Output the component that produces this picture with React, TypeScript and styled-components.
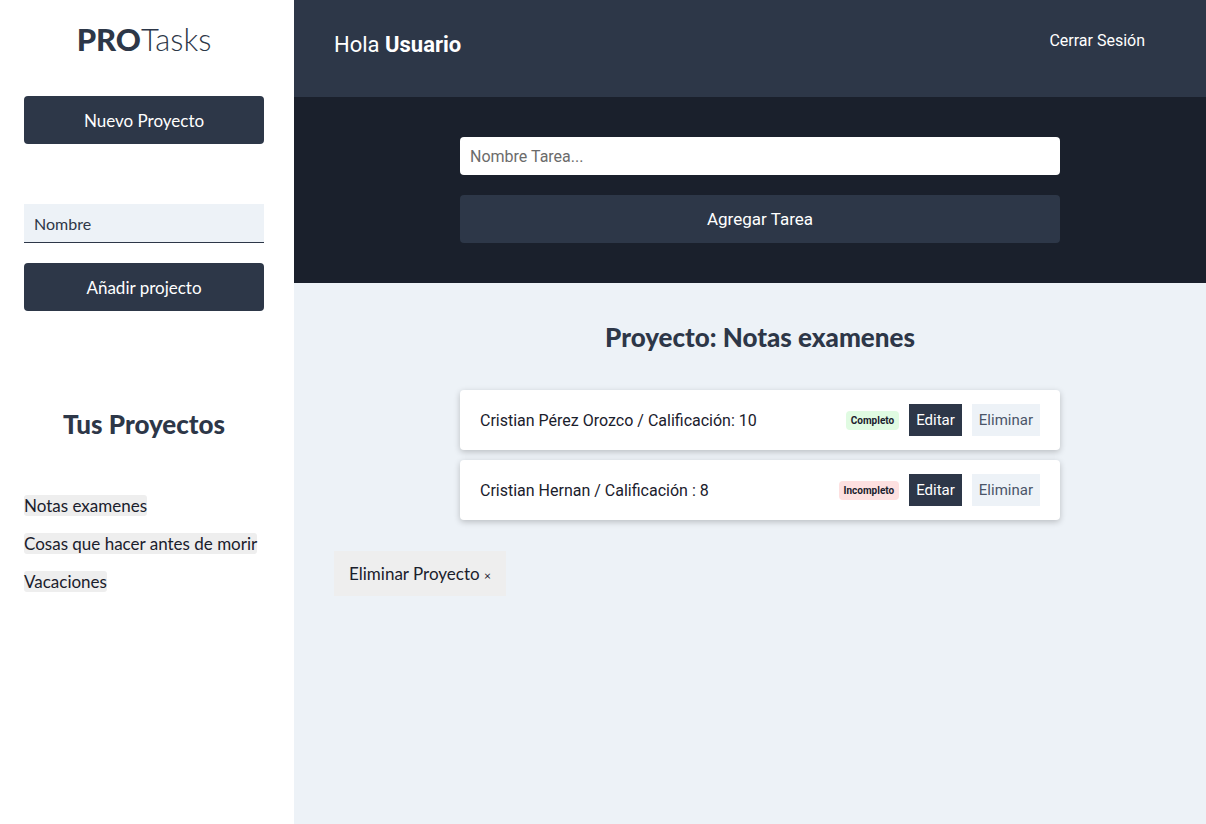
import React from "react";
import styled, { createGlobalStyle } from "styled-components";

const Global = createGlobalStyle`
  html, body { margin: 0; padding: 0; }
  body { font-family: Roboto, "Liberation Sans", sans-serif; background: #edf2f7; }
  * { box-sizing: border-box; }
`;

const Layout = styled.div`
  display: flex;
  min-height: 824px;
`;

const Sidebar = styled.aside`
  width: 294px;
  flex-shrink: 0;
  background: #ffffff;
  padding: 20px 30px 0 24px;
  font-family: Lato, "Open Sans", sans-serif;
`;

const Logo = styled.h1`
  margin: 0;
  text-align: center;
  font-size: 31px;
  font-weight: 300;
  color: #2d3748;
  line-height: 38px;
  span { font-weight: 900; }
`;

const DarkButton = styled.button`
  display: block;
  width: 240px;
  height: 48px;
  border: none;
  border-radius: 4px;
  background: #2d3748;
  color: #ffffff;
  font-family: Lato, "Open Sans", sans-serif;
  font-size: 17px;
  cursor: pointer;
`;

const NewProjectWrap = styled.div`
  margin-top: 38px;
`;

const Form = styled.div`
  margin-top: 60px;
  display: flex;
  flex-direction: column;
  gap: 20px;
`;

const NameInput = styled.input`
  width: 240px;
  height: 39px;
  border: none;
  border-bottom: 1px solid #2d3748;
  background: #edf2f7;
  padding: 0 10px;
  font-family: Lato, "Open Sans", sans-serif;
  font-size: 16px;
  color: #2d3748;
  &::placeholder { color: #2d3748; }
`;

const ProjectsTitle = styled.h2`
  margin: 98px 0 0;
  text-align: center;
  font-size: 26px;
  font-weight: 900;
  color: #2d3748;
  line-height: 30px;
`;

const ProjectList = styled.ul`
  list-style: none;
  margin: 56px 0 0;
  padding: 0;
  display: flex;
  flex-direction: column;
  gap: 17px;
`;

const ProjectItem = styled.li`
  line-height: 21px;
  span {
    background: #eeeeee;
    border-radius: 3px;
    font-size: 17px;
    color: #1a202c;
    font-weight: 400;
  }
`;

const Main = styled.main`
  flex: 1;
  display: flex;
  flex-direction: column;
`;

const Header = styled.header`
  height: 97px;
  background: #2d3748;
  display: flex;
  align-items: center;
  justify-content: space-between;
  padding: 0 61px 8px 40px;
  color: #ffffff;
`;

const Greeting = styled.p`
  margin: 0;
  font-size: 22px;
  strong { font-weight: 700; }
`;

const Logout = styled.button`
  background: none;
  border: none;
  color: #ffffff;
  font-family: Roboto, sans-serif;
  font-size: 16px;
  padding: 0 0 8px;
  cursor: pointer;
`;

const TaskFormSection = styled.section`
  background: #1a202c;
  padding: 40px 20px 40px 40px;
  display: flex;
  justify-content: center;
`;

const FormColumn = styled.div`
  width: 600px;
  display: flex;
  flex-direction: column;
  gap: 20px;
`;

const TaskInput = styled.input`
  height: 38px;
  border: none;
  border-radius: 4px;
  padding: 0 10px;
  font-family: Roboto, sans-serif;
  font-size: 16px;
  &::placeholder { color: #6b6b6b; }
`;

const AddTaskButton = styled.button`
  height: 48px;
  border: none;
  border-radius: 4px;
  background: #2d3748;
  color: #ffffff;
  font-family: Roboto, sans-serif;
  font-size: 17px;
`;

const Content = styled.section`
  padding: 40px 20px 40px 40px;
  display: flex;
  flex-direction: column;
`;

const ProjectHeading = styled.h2`
  margin: 0 auto;
  width: 600px;
  text-align: center;
  font-family: Lato, "Open Sans", sans-serif;
  font-size: 26px;
  font-weight: 900;
  color: #2d3748;
  line-height: 28px;
`;

const TaskList = styled.ul`
  list-style: none;
  margin: 39px auto 0;
  padding: 0;
  width: 600px;
  display: flex;
  flex-direction: column;
  gap: 10px;
`;

const TaskCard = styled.li`
  height: 60px;
  background: #ffffff;
  border-radius: 4px;
  box-shadow: 0 2px 6px rgba(0, 0, 0, 0.22);
  display: flex;
  align-items: center;
  padding: 0 20px;
`;

const TaskName = styled.p`
  margin: 0;
  flex: 1;
  font-size: 16px;
  color: #1a202c;
`;

const Status = styled.span<{ $done: boolean }>`
  font-size: 10px;
  font-weight: 700;
  color: #1a202c;
  padding: 4px 5px;
  border-radius: 4px;
  background: ${(p) => (p.$done ? "#e0fbe2" : "#fde0e0")};
  margin-right: 10px;
`;

const ActionButton = styled.button<{ $primary?: boolean }>`
  height: 32px;
  border: none;
  padding: 0 7px;
  font-family: Roboto, sans-serif;
  font-size: 15px;
  background: ${(p) => (p.$primary ? "#2d3748" : "#edf2f7")};
  color: ${(p) => (p.$primary ? "#ffffff" : "#4a5568")};
  & + & { margin-left: 10px; }
`;

const DeleteProject = styled.button`
  align-self: flex-start;
  margin-top: 31px;
  height: 45px;
  padding: 0 15px;
  border: none;
  background: #eeeeee;
  font-family: Lato, "Open Sans", sans-serif;
  font-size: 17px;
  color: #1a202c;
  small { font-size: 12px; }
`;

const projects = ["Notas examenes", "Cosas que hacer antes de morir", "Vacaciones"];
const tasks = [
  { name: "Cristian Pérez Orozco / Calificación: 10", done: true },
  { name: "Cristian Hernan / Calificación : 8", done: false },
];

export default function App() {
  return (
    <>
      <Global />
      <Layout>
        <Sidebar>
          <Logo>
            <span>PRO</span>Tasks
          </Logo>
          <NewProjectWrap>
            <DarkButton>Nuevo Proyecto</DarkButton>
          </NewProjectWrap>
          <Form>
            <NameInput placeholder="Nombre" />
            <DarkButton>Añadir projecto</DarkButton>
          </Form>
          <ProjectsTitle>Tus Proyectos</ProjectsTitle>
          <ProjectList>
            {projects.map((p) => (
              <ProjectItem key={p}>
                <span>{p}</span>
              </ProjectItem>
            ))}
          </ProjectList>
        </Sidebar>
        <Main>
          <Header>
            <Greeting>
              Hola <strong>Usuario</strong>
            </Greeting>
            <Logout>Cerrar Sesión</Logout>
          </Header>
          <TaskFormSection>
            <FormColumn>
              <TaskInput placeholder="Nombre Tarea..." />
              <AddTaskButton>Agregar Tarea</AddTaskButton>
            </FormColumn>
          </TaskFormSection>
          <Content>
            <ProjectHeading>Proyecto: Notas examenes</ProjectHeading>
            <TaskList>
              {tasks.map((t) => (
                <TaskCard key={t.name}>
                  <TaskName>{t.name}</TaskName>
                  <Status $done={t.done}>{t.done ? "Completo" : "Incompleto"}</Status>
                  <ActionButton $primary>Editar</ActionButton>
                  <ActionButton>Eliminar</ActionButton>
                </TaskCard>
              ))}
            </TaskList>
            <DeleteProject>
              Eliminar Proyecto <small>×</small>
            </DeleteProject>
          </Content>
        </Main>
      </Layout>
    </>
  );
}
